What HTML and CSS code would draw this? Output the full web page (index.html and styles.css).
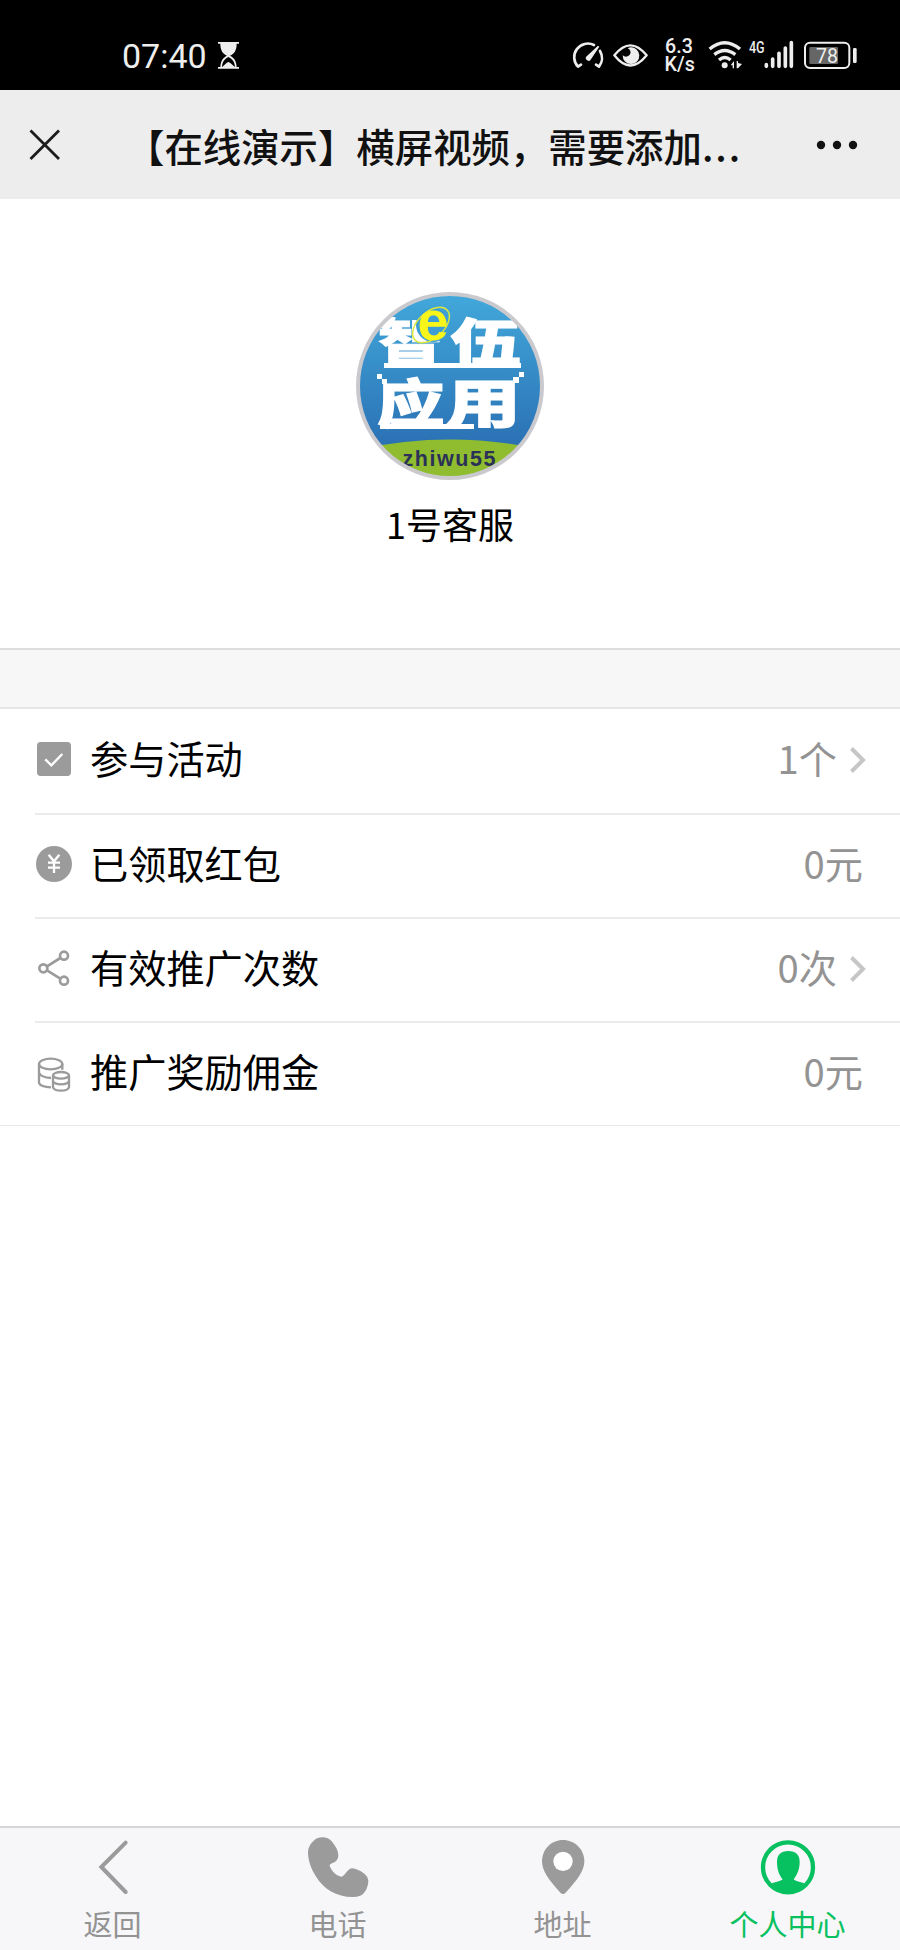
FILE: index.html
```html
<!DOCTYPE html>
<html lang="zh-CN">
<head>
    <meta charset="UTF-8">
    <title>个人中心</title>
    <link rel="stylesheet" href="styles.css">
</head>
<body>
<div class="page">
    <div class="status">
        <span class="time">07:40</span>
        <svg class="hourglass" viewBox="0 0 63 81">
            <path d="M0 0H63V5H56C56 26 48 35 36 41C48 47 55 56 56 75H63V80H0V75H7C8 56 15 47 27 41C15 35 7 26 7 5H0Z" fill="#eee"/>
            <path d="M12 75C13 58 21 50 31 45C42 50 50 58 51 75C43 70 38 62 31 60C25 62 20 70 12 75Z" fill="#000"/>
        </svg>
        <svg class="signs" viewBox="0 0 960 195">
            <!-- 速度 -->
            <g fill="none" stroke="#eee" stroke-width="8" stroke-linecap="round" stroke-linejoin="round">
                <path d="M102 60A41 41 0 0 0 54 125L63 119"/>
                <path d="M120 78A41 41 0 0 1 117 125L108 119"/>
            </g>
            <path d="M114 62L118 65L93 103A8 8 0 1 1 80 94Z" fill="#eee"/>
            <!-- 护眼 -->
            <path d="M163 91Q211 31 260 91Q211 152 163 91Z" fill="none" stroke="#eee" stroke-width="7" stroke-linejoin="round"/>
            <path d="M211 67A25 25 0 1 1 188 91Q195 97 203 94Q214 88 211 78Q209 72 203 70Z" fill="#eee"/>
            <text class="net" x="357" y="84">6.3</text>
            <text class="net" x="359" y="137">K/s</text>
            <!-- wifi -->
            <g fill="none" stroke="#eee" stroke-width="10">
                <path d="M449 72Q494 34 540 72"/>
                <path d="M463 89Q494 64 526 89"/>
                <path d="M477 105Q494 90 512 105"/>
            </g>
            <circle cx="494" cy="121" r="9" fill="#eee"/>
            <path d="M512 121L522 108V130H518V121ZM530 108H534V114L546 117L534 130H530Z" fill="#eee"/>
            <text class="g4" x="567" y="83" textLength="47" lengthAdjust="spacingAndGlyphs">4G</text>
            <path d="M619 119V124M638 102V124M657 85V124M676 69V124M694 53V124" stroke="#eee" stroke-width="11" stroke-linecap="round"/>
            <!-- 电池 -->
            <rect x="735" y="53" width="133" height="76" rx="15" fill="none" stroke="#eee" stroke-width="6"/>
            <rect x="748" y="66" width="86" height="51" rx="4" fill="#666"/>
            <rect x="879" y="69" width="11" height="45" rx="4" fill="#eee"/>
            <text class="power" x="801" y="113">78</text>
        </svg>
    </div>
    <div class="header">
        <svg class="close" viewBox="0 0 32 32"><path d="M1.500 1.500L30 30M30 1.500L1.500 30" stroke="#1c1c1c" stroke-width="2.800" fill="none"/></svg>
        <div class="title">【在线演示】横屏视频，需要添加<span class="dots">...</span></div>
        <svg class="more" viewBox="0 0 42 10">
            <circle cx="5" cy="5" r="4.200"/><circle cx="21" cy="5" r="4.200"/><circle cx="37" cy="5" r="4.200"/>
        </svg>
    </div>
    <div class="user">
        <svg class="avatar" viewBox="0 0 188 188">
            <defs>
                <linearGradient id="sky" x1="0" y1="0" x2="0" y2="1">
                    <stop offset="0" stop-color="#42a9db"/>
                    <stop offset=".8" stop-color="#2b72b5"/>
                </linearGradient>
                <clipPath id="round"><circle cx="94" cy="94" r="91"/></clipPath>
            </defs>
            <g clip-path="url(#round)">
                <rect width="188" height="188" fill="url(#sky)"/>
                <path d="M0 158Q94 137 188 158V188H0Z" fill="#8fbd2f"/>
            </g>
            <g class="logo">
                <text transform="translate(22 70) scale(1.26 1)">智</text>
                <text transform="translate(94 70) scale(1.36 1)">伍</text>
                <text transform="translate(21 131) scale(1.3 1)">应</text>
                <text transform="translate(90 131) scale(1.44 1)">用</text>
            </g>
            <path d="M28 73.500H165M24 134.500H118" stroke="#fff" stroke-width="5"/>
            <path d="M21 82h5v5h-5zM26 87h5v5h-5zM163 80h5v5h-5zM157 85h6v6h-6z" fill="#fff"/>
            <circle cx="77" cy="33" r="17" fill="#3d9ed5"/>
            <ellipse cx="75" cy="33" rx="22" ry="13" transform="rotate(-43 75 33)" fill="none" stroke="#dbe83a" stroke-width="1.500"/>
            <text class="e" x="77" y="48">e</text>
            <text class="zhiwu" x="93" y="173.500" textLength="93">zhiwu55</text>
            <circle cx="94" cy="94" r="92" fill="none" stroke="#c9c9ce" stroke-width="4"/>
        </svg>
        <div class="name">1号客服</div>
    </div>
    <div class="gap"></div>
    <ul class="list">
        <li>
            <svg class="icon" viewBox="0 0 108 108">
                <rect x="3" y="0" width="102" height="102" rx="11" fill="#9b9b9b"/>
                <path d="M28 52L46 70L79 36" fill="none" stroke="#fff" stroke-width="7"/>
            </svg>
            <span class="label">参与活动</span>
            <span class="value">1个</span>
            <svg class="arrow" viewBox="0 0 16 26"><path d="M1.500 1.500L13 13L1.500 24.500"/></svg>
        </li>
        <li>
            <svg class="icon" viewBox="0 0 108 108">
                <circle cx="54" cy="51" r="54" fill="#9b9b9b"/>
                <path d="M38 23L54 43L70 23M54 43V78M36 47H72M36 62H72" fill="none" stroke="#fff" stroke-width="7"/>
            </svg>
            <span class="label">已领取红包</span>
            <span class="value">0元</span>
        </li>
        <li>
            <svg class="icon" viewBox="0 0 108 108">
                <g fill="none" stroke="#9b9b9b" stroke-width="8">
                    <circle cx="84" cy="14" r="12"/><circle cx="22" cy="52" r="12"/><circle cx="84" cy="89" r="12"/>
                    <path d="M33 46L73 21M33 58L73 83"/>
                </g>
            </svg>
            <span class="label">有效推广次数</span>
            <span class="value">0次</span>
            <svg class="arrow" viewBox="0 0 16 26"><path d="M1.500 1.500L13 13L1.500 24.500"/></svg>
        </li>
        <li>
            <svg class="icon" viewBox="0 0 108 108">
                <g fill="none" stroke="#9b9b9b" stroke-width="7">
                    <ellipse cx="44" cy="27" rx="35" ry="16"/>
                    <path d="M9 27V84Q14 96 45 97M79 27V44M9 53Q15 68 45 69"/>
                    <ellipse cx="75" cy="61" rx="24" ry="10"/>
                    <path d="M51 61V97Q55 107 75 107Q95 107 99 97V61M51 79Q55 88 75 88Q95 88 99 79"/>
                </g>
            </svg>
            <span class="label">推广奖励佣金</span>
            <span class="value">0元</span>
        </li>
    </ul>
    <div class="tabbar">
        <div class="tab">
            <svg viewBox="0 0 186 186"><path d="M131 20L58 93L131 168" fill="none" stroke="#9b9b9b" stroke-width="12" stroke-linecap="round"/></svg>
            <span>返回</span>
        </div>
        <div class="tab">
            <svg viewBox="0 0 186 186"><path d="M20 14C28 6 36 4 46 4Q64 4 74 16Q94 40 94 58Q94 70 84 78Q66 84 68 90Q80 118 102 122Q108 122 114 114Q126 97 136 97Q150 98 172 113Q184 122 184 138Q182 160 168 174Q160 182 140 183C90 184 50 160 26 120C4 86 0 50 5 36Q8 24 20 14Z" fill="#9b9b9b"/></svg>
            <span>电话</span>
        </div>
        <div class="tab">
            <svg viewBox="0 0 186 186">
                <path d="M93 12C128 12 157 40 157 76C157 104 136 132 100 171Q93 177 86 171C50 132 30 104 30 76C30 40 58 12 93 12Z" fill="#9b9b9b"/>
                <circle cx="93" cy="76" r="29" fill="#fff"/>
            </svg>
            <span>地址</span>
        </div>
        <div class="tab active">
            <svg viewBox="0 0 186 186">
                <circle cx="93" cy="94" r="75" fill="none" stroke="#07c160" stroke-width="13"/>
                <path d="M94 45C116 45 128 56 128 77C128 104 118 118 110 130Q112 134 142 142Q122 170 93 170Q64 170 44 142Q74 134 77 130C68 118 60 104 60 77C60 56 72 45 94 45Z" fill="#07c160"/>
            </svg>
            <span>个人中心</span>
        </div>
    </div>
</div>
</body>
</html>
```

FILE: styles.css
```css
*{
    margin:0;
    padding:0;
    box-sizing:border-box;
}
body{
    font-family:"Noto Sans CJK SC",sans-serif;
    background:#fff;
    color:#000;
}
li{
    list-style:none;
}
svg{
    display:block;
    flex-shrink:0;
}
.page{
    width:900px;
    height:1950px;
    display:flex;
    flex-direction:column;
    overflow:hidden;
}
.status{
    height:90px;
    background:#000;
    display:flex;
    align-items:flex-start;
    padding:25px 20px 0 122px;
}
.time{
    width:96px;
    padding-top:11px;
    font:400 34px/40px Roboto,sans-serif;
    color:#eee;
}
.hourglass{
    width:21px;
    height:27px;
    margin-top:17px;
}
.signs{
    width:320px;
    height:65px;
    margin-left:auto;
}
.signs text{
    font-family:Roboto,sans-serif;
    fill:#eee;
}
.signs .net{
    font-size:59px;
    font-weight:500;
    text-anchor:middle;
}
.signs .g4{
    font-size:48px;
    font-weight:500;
}
.signs .power{
    font-size:59px;
    text-anchor:middle;
}
.header{
    height:109px;
    background:#ededed;
    display:flex;
    align-items:center;
}
.close{
    width:32px;
    height:32px;
    margin-left:29px;
}
.title{
    width:690px;
    margin-left:65px;
    font-size:38.400px;
    font-weight:500;
    line-height:60px;
    color:#111;
    white-space:nowrap;
}
.dots{
    letter-spacing:2px;
}
.more{
    width:42px;
    height:10px;
    fill:#111;
}
.user{
    height:449px;
    padding-top:93px;
    display:flex;
    flex-direction:column;
    align-items:center;
}
.avatar{
    width:188px;
    height:188px;
}
.logo text{
    font-size:52px;
    font-weight:900;
    fill:#fff;
    stroke:#fff;
    stroke-width:1px;
}
.avatar .e{
    font:bold 56px "Liberation Sans",sans-serif;
    text-anchor:middle;
    fill:#f7f51a;
}
.avatar .zhiwu{
    font:bold 21.500px "Liberation Sans",sans-serif;
    text-anchor:middle;
    fill:#2b3157;
}
.name{
    margin-top:16px;
    font-size:36px;
    line-height:54px;
}
.gap{
    height:61px;
    background:#f7f7f7;
    border-top:2px solid #dedede;
    border-bottom:2px solid #e6e6e6;
}
.list{
    border-bottom:1px solid #e8e8e8;
}
.list li{
    height:104px;
    margin-left:35px;
    padding:0 34px 3px 0;
    display:flex;
    align-items:center;
    font-size:38.200px;
    line-height:56px;
}
.list li + li{
    border-top:2px solid #ebebeb;
}
.icon{
    width:36px;
    height:36px;
    margin-left:1px;
    overflow:visible;
}
.label,.value{
    padding-bottom:4px;
}
.label{
    margin-left:18px;
    flex:1;
}
.value{
    color:#939393;
    padding-right:3px;
}
.arrow{
    width:16px;
    height:26px;
    margin-left:10px;
    fill:none;
    stroke:#c6c6c6;
    stroke-width:4px;
}
.tabbar{
    margin-top:auto;
    height:124px;
    background:#f7f7fa;
    border-top:2px solid #d6d6d8;
    display:flex;
}
.tab{
    flex:1;
    display:flex;
    flex-direction:column;
    align-items:center;
    padding-top:8px;
    font-size:29px;
    line-height:40px;
    color:#939393;
}
.tab svg{
    width:62px;
    height:62px;
    margin-bottom:5px;
}
.active{
    color:#07c160;
}
```
